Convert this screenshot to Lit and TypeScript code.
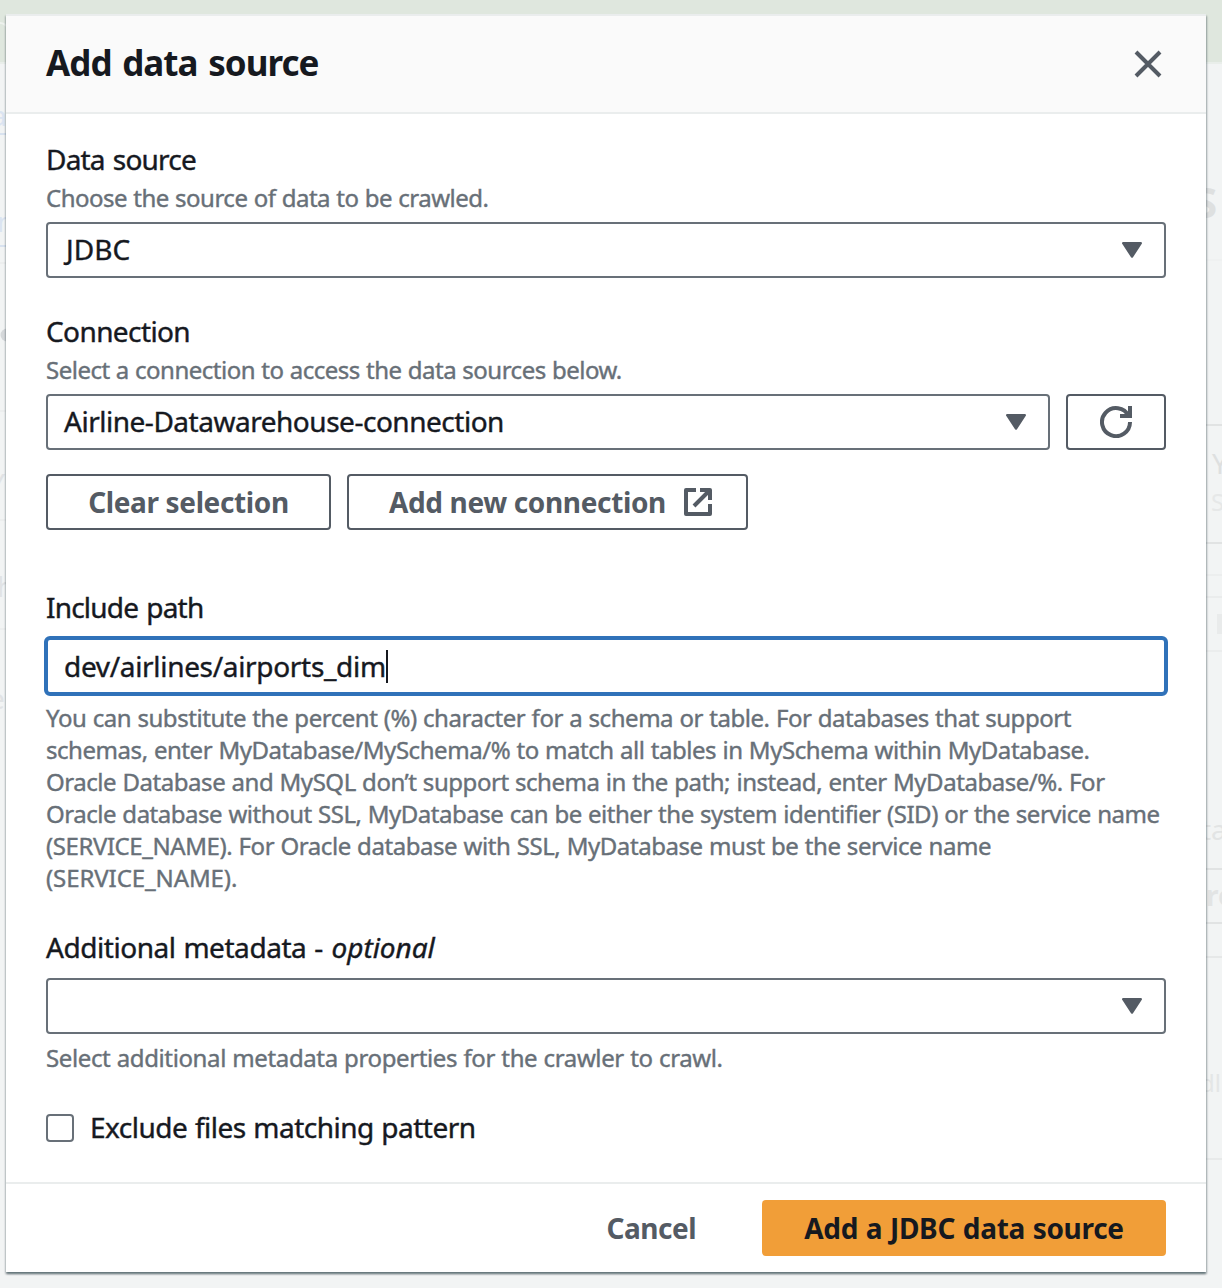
import { LitElement, html, css, svg } from "lit";
import { customElement, property, state } from "lit/decorators.js";
import { classMap } from "lit/directives/class-map.js";

const caret = html`<svg class="caret" width="20" height="16" viewBox="0 0 20 16">
  <path d="M1.2 1.2H18.8L10 14.6Z" fill="#545b64" stroke="#545b64" stroke-width="2.4" stroke-linejoin="round" />
</svg>`;

const closeIcon = html`<svg width="32" height="32" viewBox="0 0 32 32">
  <path d="M4 4L28 28M28 4L4 28" fill="none" stroke="#545b64" stroke-width="4" />
</svg>`;

const refreshIcon = html`<svg width="32" height="32" viewBox="0 0 32 32">
  <path d="M30 16A14 14 0 1 1 28.6 10" fill="none" stroke="#545b64" stroke-width="4" />
  <path d="M20 10H30V0" fill="none" stroke="#545b64" stroke-width="4" />
</svg>`;

const externalIcon = html`<svg width="32" height="32" viewBox="0 0 32 32">
  <path d="M14 4H4V28H28V18" fill="none" stroke="#545b64" stroke-width="4" stroke-linejoin="round" />
  <path d="M18 4H28V14M28 4L12 20" fill="none" stroke="#545b64" stroke-width="4" stroke-linejoin="round" />
</svg>`;

@customElement("select-box")
class SelectBox extends LitElement {
  @property() value = "";
  static styles = css`
    :host { display: block; flex: 1; }
    .box {
      box-sizing: border-box; height: 56px; border: 2px solid #687078; border-radius: 4px;
      background: #fff; display: flex; align-items: center; justify-content: space-between;
      padding: 0 22px 0 16px;
    }
    .value {
      font-size: 28px; line-height: 50px; padding-bottom: 2px; color: #16191f;
      letter-spacing: -0.48px; white-space: nowrap;
    }
    .short { letter-spacing: 0.1px; padding-left: 2px; }
    .caret { display: block; }
  `;
  render() {
    const classes = { value: true, short: this.value.length < 6 };
    return html`<div class="box"><span class=${classMap(classes)}>${this.value}</span>${caret}</div>`;
  }
}

@customElement("page-backdrop")
class PageBackdrop extends LitElement {
  static styles = css`
    :host { display: block; }
    svg { display: block; font-family: "Noto Sans", "Open Sans", sans-serif; }
    .bold { font-weight: 700; }
  `;
  render() {
    const rightLines: [number, string][] = [
      [260, "#eff1f1"], [425, "#e1e3e3"], [543, "#e1e3e3"], [575, "#eceeee"], [597, "#eaecec"],
      [651, "#ebeded"], [869, "#e1e3e3"], [923, "#e1e3e3"], [957, "#e6e8e8"], [1159, "#e8eaea"],
    ];
    const leftLines = [263, 411, 520, 629];
    return html`<svg width="1222" height="1288" viewBox="0 0 1222 1288">
      <rect width="1222" height="1288" fill="#f2f4f4" />
      <rect width="1222" height="62" fill="#dfe7de" />
      <rect y="62" width="1222" height="2" fill="#e9eeea" />
      <path d="M0 23Q5 23 9 29" stroke="#eef2ee" stroke-width="2" fill="none" />
      ${rightLines.map(([y, c]) => svg`<rect x="1200" y=${y - 1} width="22" height="2" fill=${c} />`)}
      ${leftLines.map((y) => svg`<rect x="0" y=${y - 1} width="8" height="2" fill="#eceeee" />`)}
      <rect y="133" width="8" height="2" fill="#d8e2ef" />
      <rect y="245" width="8" height="2" fill="#d8e2ef" />
      <g fill="#dbe4f1" font-size="28">
        <text x="-9" y="126">a</text>
        <text x="-3" y="232">n</text>
      </g>
      <circle cx="7" cy="335" r="6.5" fill="#d5d8da" />
      <g fill="#e1e3e5" font-size="28">
        <text x="-11" y="494">Y</text>
        <text x="-3" y="597">h</text>
        <text x="-11" y="709">e</text>
      </g>
      <text class="bold" x="1194" y="218" font-size="42" fill="#dee0e0">S</text>
      <text x="1212" y="474" font-size="28" fill="#dee0e0">Y</text>
      <text x="1211" y="511" font-size="24" fill="#e6e8e8">S</text>
      <rect x="1217" y="614" width="5" height="20" fill="#e9ebeb" />
      <text x="1201" y="840" font-size="28" fill="#e2e4e4">ta</text>
      <text class="bold" x="1206" y="906" font-size="28" fill="#e2e4e4">re</text>
      <text x="1200" y="1092" font-size="24" fill="#e4e6e6">dl</text>
    </svg>`;
  }
}

@customElement("app-root")
class AppRoot extends LitElement {
  @state() private path = "dev/airlines/airports_dim";

  static styles = css`
    :host {
      display: block; width: 1222px; height: 1288px; overflow: hidden;
      font-family: "Noto Sans", "Open Sans", sans-serif; color: #16191f;
      -webkit-text-stroke-width: 0.4px;
    }
    .page { display: grid; width: 1222px; height: 1288px; }
    .layer { grid-area: 1 / 1; -webkit-text-stroke-width: 0; }
    .modal {
      grid-area: 1 / 1; z-index: 1; margin: 14px 16px 16px 6px; box-sizing: border-box; width: 1200px;
      height: 1258px; background: #fff; display: flex; flex-direction: column;
      border-top: 2px solid #eaeded;
      box-shadow: 0 2px 2px rgba(0, 28, 36, 0.42), 1px 2px 2px 0 rgba(0, 28, 36, 0.22), -1px 2px 2px 0 rgba(0, 28, 36, 0.1);
    }
    header {
      box-sizing: border-box; height: 98px; background: #fafafa; border-bottom: 2px solid #eaeded;
      display: flex; align-items: center; justify-content: space-between; padding: 0 42px 0 40px;
    }
    h2 {
      margin: 0; font-size: 35px; line-height: 48px; font-weight: 700; letter-spacing: -0.95px; word-spacing: 2.4px;
      padding-bottom: 2px; -webkit-text-stroke-width: 0;
    }
    .close { display: block; height: 32px; }
    .body { flex: 1; padding: 25px 40px 0; display: flex; flex-direction: column; gap: 33px; }
    .label {
      font-size: 28px; line-height: 40px; height: 40px; letter-spacing: -0.8px; word-spacing: 1.6px;
      white-space: nowrap;
    }
    .single { letter-spacing: -0.6px; }
    .wide { letter-spacing: -0.45px; word-spacing: 1px; }
    .wide em { letter-spacing: -0.05px; margin-left: 1px; }
    .hint {
      font-size: 24px; line-height: 32px; color: #687078; letter-spacing: -0.5px; word-spacing: 0.5px;
      white-space: nowrap;
    }
    .above { margin: 3px 0 8px; }
    .row { display: flex; gap: 16px; }
    .actions { margin-top: 24px; }
    .btn {
      box-sizing: border-box; height: 56px; border: 2px solid #545b64; border-radius: 4px; color: #545b64;
      font-size: 28px; font-weight: 700; line-height: 52px; letter-spacing: -0.36px; white-space: nowrap;
      display: flex; align-items: center; justify-content: center; -webkit-text-stroke-width: 0;
    }
    .btn svg { display: block; }
    .refresh { width: 100px; }
    .clear { width: 285px; }
    .external { width: 401px; justify-content: space-between; padding: 0 32px 0 40px; }
    .include { margin-top: 24px; }
    .input {
      box-sizing: border-box; height: 60px; margin: 9px -2px 6px; border: 4px solid #3072b9; border-radius: 6px;
      display: flex; align-items: center; padding-left: 16px; font-size: 28px; letter-spacing: -0.32px;
    }
    .cursor { width: 2px; height: 33px; background: #16191f; }
    .line { display: block; letter-spacing: -0.45px; }
    .line:nth-child(4) { letter-spacing: -0.47px; }
    .line:nth-child(5) { letter-spacing: -0.43px; }
    .line:nth-child(6) { letter-spacing: -0.09px; }
    .metadata { margin: 11px 0 8px; }
    .below { letter-spacing: -0.38px; }
    .check { display: flex; align-items: center; gap: 16px; height: 40px; }
    .box { box-sizing: border-box; width: 28px; height: 28px; border: 2px solid #687078; border-radius: 4px; margin-top: 2px; }
    .check span { font-size: 28px; line-height: 40px; letter-spacing: -0.5px; word-spacing: 0.8px; }
    footer {
      box-sizing: border-box; height: 90px; border-top: 2px solid #eaeded; padding: 16px 40px 0;
      display: flex; justify-content: flex-end; gap: 16px;
    }
    .cancel { border-color: transparent; padding: 0 48px; letter-spacing: -0.5px; }
    .primary {
      width: 404px; background: #f19e38; border-color: #f19e38; color: #16191f;
      letter-spacing: -0.3px; word-spacing: 0.7px;
    }
  `;

  private help = [
    "You can substitute the percent (%) character for a schema or table. For databases that support",
    "schemas, enter MyDatabase/MySchema/% to match all tables in MySchema within MyDatabase.",
    "Oracle Database and MySQL don’t support schema in the path; instead, enter MyDatabase/%. For",
    "Oracle database without SSL, MyDatabase can be either the system identifier (SID) or the service name",
    "(SERVICE_NAME). For Oracle database with SSL, MyDatabase must be the service name",
    "(SERVICE_NAME).",
  ];

  render() {
    return html`<div class="page">
      <page-backdrop class="layer"></page-backdrop>
      <section class="modal">
        <header><h2>Add data source</h2><span class="close">${closeIcon}</span></header>
        <div class="body">
          <div>
            <div class="label">Data source</div>
            <div class="hint above">Choose the source of data to be crawled.</div>
            <select-box value="JDBC"></select-box>
          </div>
          <div>
            <div class="label single">Connection</div>
            <div class="hint above">Select a connection to access the data sources below.</div>
            <div class="row">
              <select-box value="Airline-Datawarehouse-connection"></select-box>
              <div class="btn refresh">${refreshIcon}</div>
            </div>
            <div class="row actions">
              <div class="btn clear"><span>Clear selection</span></div>
              <div class="btn external"><span>Add new connection</span>${externalIcon}</div>
            </div>
          </div>
          <div class="include">
            <div class="label">Include path</div>
            <div class="input"><span>${this.path}</span><i class="cursor"></i></div>
            <div class="hint">${this.help.map((t) => html`<span class="line">${t}</span>`)}</div>
          </div>
          <div>
            <div class="label wide">Additional metadata - <em>optional</em></div>
            <select-box class="metadata"></select-box>
            <div class="hint below">Select additional metadata properties for the crawler to crawl.</div>
          </div>
          <div class="check"><div class="box"></div><span>Exclude files matching pattern</span></div>
        </div>
        <footer>
          <div class="btn cancel"><span>Cancel</span></div>
          <div class="btn primary"><span>Add a JDBC data source</span></div>
        </footer>
      </section>
    </div>`;
  }
}
